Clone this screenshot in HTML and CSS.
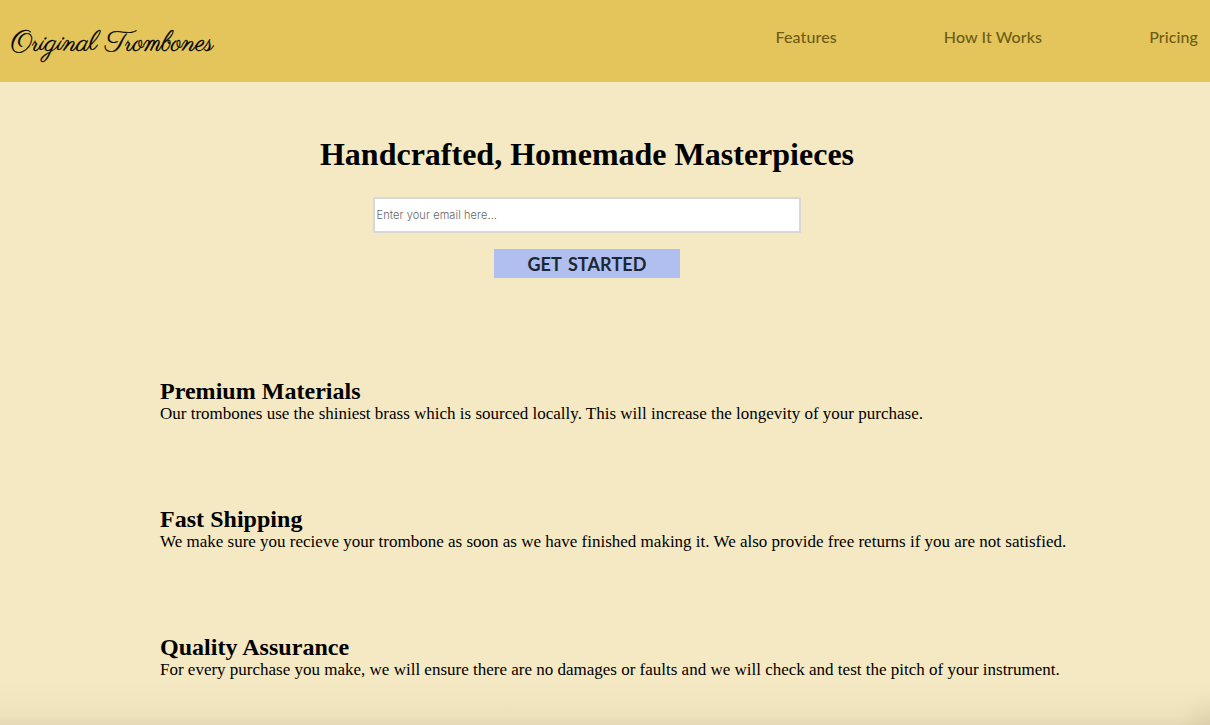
FILE: index.html
```html
<!DOCTYPE html>
<html lang="en">
<head>
<meta charset="utf-8">
<title>Original Trombones</title>
<link rel="stylesheet" href="styles.css">
</head>
<body>
<header class="header">
  <div class="logo">Original Trombones</div>
  <nav class="nav">
    <a class="link" href="#features">Features</a>
    <a class="link" href="#how">How It Works</a>
    <a class="link" href="#pricing">Pricing</a>
  </nav>
</header>
<main>
  <form class="hero">
    <h1 class="title">Handcrafted, Homemade Masterpieces</h1>
    <input class="email" type="email" placeholder="Enter your email here...">
    <button class="submit" type="button">GET STARTED</button>
  </form>
  <section class="features" id="features">
    <article class="feature">
      <h2 class="heading">Premium Materials</h2>
      <p class="copy">Our trombones use the shiniest brass which is sourced locally. This will increase the longevity of your purchase.</p>
    </article>
    <article class="feature">
      <h2 class="heading">Fast Shipping</h2>
      <p class="copy">We make sure you recieve your trombone as soon as we have finished making it. We also provide free returns if you are not satisfied.</p>
    </article>
    <article class="feature">
      <h2 class="heading">Quality Assurance</h2>
      <p class="copy">For every purchase you make, we will ensure there are no damages or faults and we will check and test the pitch of your instrument.</p>
    </article>
  </section>
</main>
</body>
</html>
```
FILE: styles.css
```css
* { box-sizing: border-box; margin: 0; padding: 0; }
body {
  height: 725px;
  overflow: hidden;
  background:
    radial-gradient(ellipse 30px 36px at 100% 100%, rgba(190, 175, 130, .25), rgba(190, 175, 130, 0)),
    linear-gradient(to bottom, #f5e9c3 680px, #f1e5c0 703px, #ebe1bb 716px, #e6d9b5 725px);
  color: #000;
  font-family: "Liberation Serif", serif;
}
.header { height: 82px; padding: 0 12px 0 11px; display: flex; justify-content: space-between; background: #e3c55b; }
.logo { padding-top: 26px; font: 28px/36px "Parisienne", cursive; white-space: nowrap; -webkit-text-stroke: .3px #000; }
.nav { display: flex; gap: 107px; padding-top: 27px; }
.link { font: 500 16px/20px Lato, sans-serif; letter-spacing: .1px; color: #6e5c17; text-decoration: none; }
.hero { width: 1174px; height: 295px; padding-top: 54px; display: flex; flex-direction: column; align-items: center; }
.title { font-size: 32px; line-height: 37px; white-space: nowrap; }
.email { width: 428px; height: 36px; margin-top: 24px; padding: 0 1.5px; border: 2px solid #d8d8d8; background: #fff; font: 300 11px Inter, sans-serif; letter-spacing: .1px; }
.email::placeholder { color: #666; }
.submit { width: 186px; height: 29px; margin-top: 16px; padding-top: 1px; border: 0; background: #b1bef0; color: #1b2831; font: 700 18px/28px Lato, sans-serif; letter-spacing: .1px; word-spacing: 2px; }
.features { padding-left: 160px; display: flex; flex-direction: column; }
.feature { height: 128px; padding-top: 1px; }
.heading { font-size: 24px; line-height: 27px; letter-spacing: .03px; }
.copy { margin-top: -1px; font-size: 17px; line-height: 19px; white-space: nowrap; }
```
